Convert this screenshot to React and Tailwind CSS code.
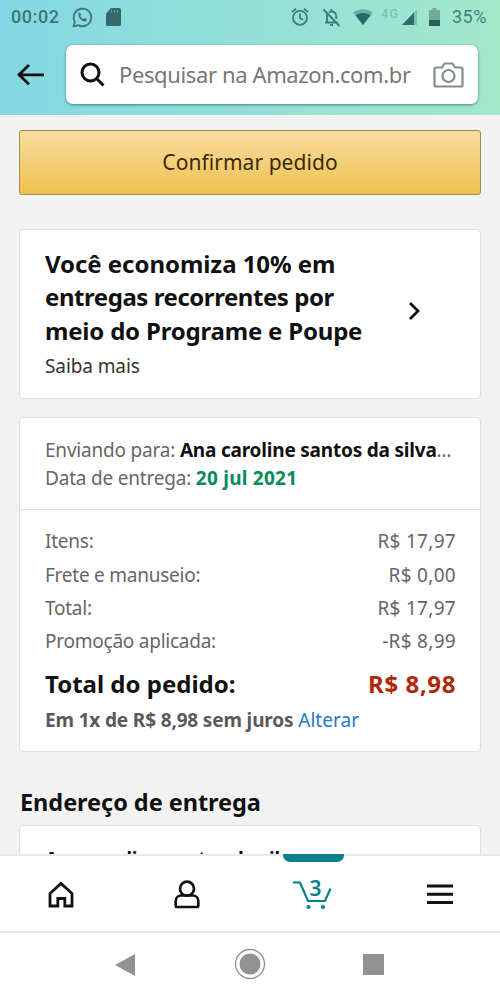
import React from 'react';

const summary = [
  { label: 'Itens:', value: 'R$ 17,97' },
  { label: 'Frete e manuseio:', value: 'R$ 0,00' },
  { label: 'Total:', value: 'R$ 17,97' },
  { label: 'Promoção aplicada:', value: '-R$ 8,99' },
];

const StatusBar = () => (
  <div className="flex h-[34px] items-center justify-between pl-[11px] pr-[11px] font-['Roboto',sans-serif] text-[#3f7478]">
    <div className="flex items-center">
      <span className="w-[50px] text-[18px] font-medium leading-none tracking-[0.6px]">00:02</span>
      <svg className="ml-[11px]" width="21" height="21" viewBox="0 0 21 21" fill="none" stroke="currentColor" strokeWidth="1.8">
        <path d="M1.5 19.5l1.3-4.8a8.8 8.8 0 1 1 3.4 3.4z" strokeLinejoin="round" />
        <path d="M6.6 6.2c.8-1 1.6-.7 1.9.2l.6 1.5-.8 1.2c.7 1.5 1.8 2.4 3.2 3l1.3-1 1.9 1c.6.5 0 2-1.3 2.3-3.6.5-8-4.5-6.8-8.2z" fill="currentColor" stroke="none" />
      </svg>
      <svg className="ml-[13px]" width="15" height="18" viewBox="0 0 15 18">
        <path d="M5 0h8.5a1.5 1.5 0 0 1 1.5 1.5v15a1.5 1.5 0 0 1-1.5 1.5h-12a1.5 1.5 0 0 1-1.5-1.5v-11z" fill="#356a6d" />
        <path d="M5.5 2v2.5M8.5 2v2.5M11.5 2v2.5" stroke="#6a9fa2" strokeWidth="1.2" />
      </svg>
    </div>
    <div className="flex items-center text-[#417f7c]">
      <svg width="18" height="18" viewBox="0 0 18 18" fill="none" stroke="currentColor" strokeWidth="1.8">
        <circle cx="9" cy="9.8" r="7" />
        <path d="M9 5.5v4.500l3 2M1 4l4-3.200M17 4l-4-3.200" />
      </svg>
      <svg className="ml-[13px]" width="19" height="19" viewBox="0 0 19 19" fill="none" stroke="currentColor" strokeWidth="2">
        <path d="M5 6v8M3 14.500h12.500M7 4.300c4-2.300 7.300.5 7.300 4.200v2.500M9.500 1v2.500M8 17h3M1.500 1.500l16 16.500" />
      </svg>
      <svg className="ml-[12px]" width="20" height="16" viewBox="0 0 20 16">
        <path d="M0 3.500Q10-3.500 20 3.500L10 16z" fill="#6cb0a8" />
        <path d="M2.500 6.300Q10 1.700 17.500 6.300L10 16z" fill="#28696b" />
      </svg>
      <span className="-mt-[7px] ml-[8px] w-[19px] text-[13px] font-medium leading-none tracking-[0.8px] text-[#78c4b5]">4G</span>
      <svg className="ml-[2px]" width="15" height="16" viewBox="0 0 15 16">
        <path d="M15 0v16H0z" fill="#7bc1b1" />
        <path d="M12 3.500V16H0z" fill="#2f6b67" />
      </svg>
      <svg className="ml-[12px]" width="11" height="18" viewBox="0 0 11 18">
        <path d="M3.500 0h4v2H11v16H0V2h3.500z" fill="#6fa99c" />
        <path d="M0 12h11v6H0z" fill="#2c5f58" />
      </svg>
      <span className="ml-[12px] w-[37px] text-[18px] leading-none tracking-[0.5px]">35%</span>
    </div>
  </div>
);

const SearchHeader = () => (
  <div className="flex h-[81px] items-start pt-[11px]">
    <svg className="ml-[17px] mt-[18px] shrink-0" width="28" height="24" viewBox="0 0 28 24" fill="none" stroke="#111" strokeWidth="2.800">
      <path d="M2 11.800h25M12 2L2 11.800l10 9.500" />
    </svg>
    <div className="ml-[21px] flex h-[59px] w-[412px] items-center rounded-[7px] bg-white shadow-[0_1px_3px_rgba(0,70,80,0.6)]">
      <svg className="ml-[14px] shrink-0" width="25" height="25" viewBox="0 0 25 25" fill="none" stroke="#111" strokeWidth="3">
        <circle cx="10.500" cy="10.500" r="8.500" />
        <path d="M16.500 16.500l7 7" />
      </svg>
      <span className="-mt-[2px] ml-[14px] w-[295px] whitespace-nowrap text-[22px] leading-[30px] tracking-[-0.38px] text-[#777]">Pesquisar na Amazon.com.br</span>
      <svg className="ml-[19px] shrink-0" width="31" height="26" viewBox="0 0 31 26" fill="none" stroke="#858c8f" strokeWidth="2.200">
        <path d="M3 5.500h6l2.500-4h8l2.500 4h6q1.500 0 1.500 1.500v16q0 1.500-1.500 1.500H3q-1.500 0-1.500-1.500V7q0-1.500 1.500-1.500z" strokeLinejoin="round" />
        <circle cx="15.500" cy="14" r="6" />
      </svg>
    </div>
  </div>
);

const SavingsCard = () => (
  <div className="mt-[34px] flex h-[170px] items-start rounded-[4px] border border-[#dfdfdf] bg-white pl-[25px] pt-[17px]">
    <div className="w-[339px] whitespace-nowrap">
      <h2 className="text-[24px] font-bold leading-[33.300px] text-[#111]">
        <span className="tracking-[-0.05px]">Você economiza 10% em</span><br />
        <span className="tracking-[-0.45px]">entregas recorrentes por</span><br />
        <span className="tracking-[-0.2px]">meio do Programe e Poupe</span>
      </h2>
      <p className="mt-[5px] text-[19px] leading-7 tracking-[-0.1px] text-[#333]">Saiba mais</p>
    </div>
    <svg className="ml-[24px] mt-[54px]" width="14" height="20" viewBox="0 0 14 20" fill="none" stroke="#111" strokeWidth="2.800">
      <path d="M2 2l8 8-8 8" />
    </svg>
  </div>
);

const OrderCard = () => (
  <div className="mt-[18px] h-[335px] whitespace-nowrap rounded-[4px] border border-[#dfdfdf] bg-white text-[19px] text-[#666]">
    <div className="h-[92px] border-b border-[#dfdfdf] px-[25px] pt-[18px] leading-[28px]">
      <p className="tracking-[-0.2px]">
        <span>Enviando para: </span>
        <b className="text-[#111]">Ana caroline santos da silva</b>…
      </p>
      <p>
        <span className="tracking-[-0.2px]">Data de entrega: </span>
        <b className="tracking-[0.25px] text-[#078a5c]">20 jul 2021</b>
      </p>
    </div>
    <div className="pl-[25px] pr-6 pt-[15px]">
      {summary.map((row) => (
        <div key={row.label} className="flex h-[33.300px] items-center justify-between">
          <span className="tracking-[-0.24px]">{row.label}</span>
          <span className="tracking-[0.3px]">{row.value}</span>
        </div>
      ))}
      <div className="mt-[7px] flex h-[38px] items-center justify-between text-[24px] font-bold">
        <span className="text-[#111]">Total do pedido:</span>
        <span className="tracking-[0.6px] text-[#b12704]">R$ 8,98</span>
      </div>
      <p className="mt-[3px] leading-7 tracking-[-0.15px]">
        <b className="text-[#5a5a5a]">Em 1x de R$ 8,98 sem juros</b>{' '}
        <span className="tracking-[0.05px] text-[#2478cc]">Alterar</span>
      </p>
    </div>
  </div>
);

const BottomNav = () => (
  <nav className="grid h-[78px] grid-cols-4 border-t-2 border-[#e8e8e8] bg-white">
    <div className="flex justify-center pt-[25px]">
      <svg className="mr-[4px]" width="28" height="28" viewBox="0 0 28 28" fill="none" stroke="#111" strokeWidth="2.800">
        <path d="M3 12.500L14 2.500l11 10v12.500h-7.200v-7.500h-7v7.500H3z" />
      </svg>
    </div>
    <div className="flex justify-center pt-[24px]">
      <svg className="mr-[2px]" width="28" height="30" viewBox="0 0 28 30" fill="none" stroke="#111" strokeWidth="2.700">
        <circle cx="14" cy="8.700" r="7" />
        <path d="M9 15.500H8.200C5 15.500 2.700 18 2.700 21v4.500q0 1.500 1.500 1.500h19.600q1.500 0 1.500-1.500V21c0-3-2.300-5.500-5.500-5.500H9" />
      </svg>
    </div>
    <div className="relative flex justify-center pt-[24px]">
      <span className="absolute -top-[2px] left-[33px] h-[8px] w-[61px] rounded-b-[7px] bg-[#08818e]" />
      <svg className="mr-[1px]" width="40" height="31" viewBox="0 0 40 31" fill="none" stroke="#08818e" strokeWidth="2.200">
        <path d="M1 2.500h7l8 18.500h17L38.500 8.500" />
        <circle cx="16.500" cy="27" r="2.100" fill="#08818e" stroke="none" />
        <circle cx="31" cy="27" r="2.100" fill="#08818e" stroke="none" />
      </svg>
      <span className="absolute left-[59.500px] top-[21.500px] text-[21px] font-semibold leading-[20px] text-[#08818e]">3</span>
    </div>
    <div className="flex justify-center pt-[28px]">
      <svg className="ml-[4px]" width="26" height="21" viewBox="0 0 26 21" stroke="#111" strokeWidth="3">
        <path d="M0 2h26M0 10.300h26M0 18.600h26" />
      </svg>
    </div>
  </nav>
);

const SystemNav = () => (
  <div className="flex h-[67px] items-start border-t-2 border-[#e4e4e4] bg-white pt-[15px]">
    <svg className="ml-[115px] mt-[6px]" width="20" height="22" viewBox="0 0 20 22">
      <path d="M20 0v22L0 11z" fill="#929292" />
    </svg>
    <svg className="ml-[99px]" width="32" height="32" viewBox="0 0 32 32">
      <circle cx="16" cy="16" r="14.500" fill="none" stroke="#929292" strokeWidth="1.300" />
      <circle cx="16" cy="16" r="10.500" fill="#929292" />
    </svg>
    <div className="ml-[97px] mt-[6px] h-[21px] w-[21px] bg-[#929292]" />
  </div>
);

const App = () => {
  return (
    <div className="flex h-[998px] w-[500px] flex-col overflow-hidden bg-[#f2f2f2] font-['Noto_Sans',sans-serif]">
      <header className="h-[115px] shrink-0 bg-linear-to-r from-[#82d8e3] to-[#a4e8cb]">
        <StatusBar />
        <SearchHeader />
      </header>

      <main className="h-[739px] shrink-0 overflow-hidden px-[19px] pt-[15px]">
        <button className="block h-[65px] w-full rounded-[3px] border border-[#a18a50] bg-linear-to-b from-[#f6dc9e] to-[#f0c14b] text-[21px] tracking-[0.05px] text-[#3a2a0a]">
          Confirmar pedido
        </button>
        <SavingsCard />
        <OrderCard />
        <h2 className="mt-[33px] h-[40px] pl-px text-[23.500px] font-bold leading-[34px] tracking-[-0.05px] text-[#111]">Endereço de entrega</h2>
        <div className="h-[60px] whitespace-nowrap rounded-[4px] border border-[#dfdfdf] bg-white px-[25px] pt-[19px] text-[19px] font-bold leading-7 tracking-[-0.2px] text-[#111]">
          Ana caroline santos da silva
        </div>
      </main>

      <BottomNav />
      <SystemNav />
    </div>
  );
};

export default App;
